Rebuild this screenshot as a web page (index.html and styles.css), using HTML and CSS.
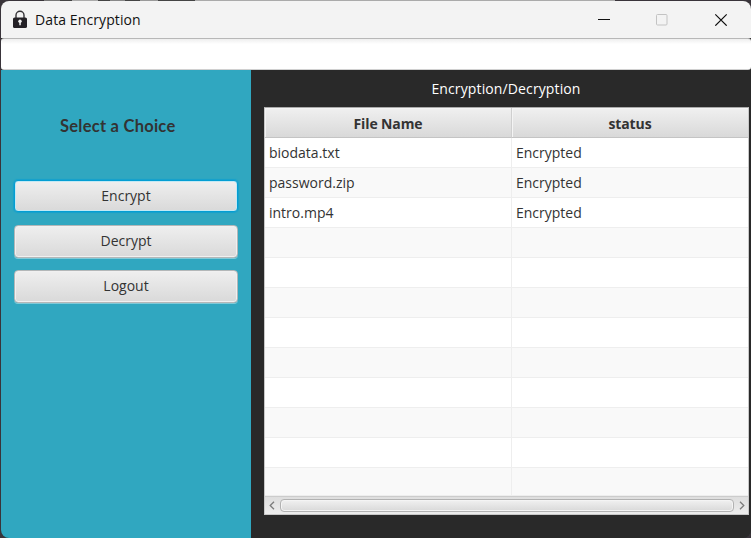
FILE: index.html
```html
<!DOCTYPE html>
<html lang="en">
<head>
<meta charset="utf-8">
<title>Data Encryption</title>
<link rel="stylesheet" href="styles.css">
</head>
<body>
<div class="window">
  <header class="titlebar">
    <svg class="lock" width="14" height="19" viewBox="0 0 14 19"><path d="M3 8V5.2a4 4 0 0 1 8 0V8" fill="none" stroke="#343236" stroke-width="1.4"/><rect y="7.5" width="14" height="10.5" rx="1.6" fill="#242126"/><circle cx="7" cy="11.3" r="1.7" fill="#f3f3f3"/><path d="M6.3 11h1.5v4.3H6.3z" fill="#f3f3f3"/></svg>
    <span class="title">Data Encryption</span>
    <svg class="controls" width="132" height="14" viewBox="0 0 132 14"><path d="M0 7.5h12" stroke="#111"/><rect x="58.5" y="2.5" width="10.5" height="10.5" rx="1" fill="none" stroke="#c3c3c3"/><path d="M117.3 2.3l11.4 11.4M128.7 2.3l-11.4 11.4" stroke="#111" stroke-width="1.2"/></svg>
  </header>
  <div class="toolbar"></div>
  <div class="content">
    <aside class="sidebar">
      <h1 class="heading">Select a Choice</h1>
      <button class="button focused">Encrypt</button>
      <button class="button">Decrypt</button>
      <button class="button">Logout</button>
    </aside>
    <main class="main">
      <h2 class="caption">Encryption/Decryption</h2>
      <div class="table">
        <div class="row head"><div>File Name</div><div>status</div></div>
        <div class="row"><div>biodata.txt</div><div>Encrypted</div></div>
        <div class="row"><div>password.zip</div><div>Encrypted</div></div>
        <div class="row"><div>intro.mp4</div><div>Encrypted</div></div>
        <div class="row"><div></div><div></div></div>
        <div class="row"><div></div><div></div></div>
        <div class="row"><div></div><div></div></div>
        <div class="row"><div></div><div></div></div>
        <div class="row"><div></div><div></div></div>
        <div class="row"><div></div><div></div></div>
        <div class="row"><div></div><div></div></div>
        <div class="row"><div></div><div></div></div>
        <div class="row last"><div></div><div></div></div>
        <div class="scrollbar">
          <svg width="6" height="9" viewBox="0 0 6 9"><path d="M5 .7L1.2 4.5 5 8.3" fill="none" stroke="#7c7c7c" stroke-width="1.3"/></svg>
          <div class="thumb"></div>
          <svg width="6" height="9" viewBox="0 0 6 9"><path d="M1 .7l3.8 3.8L1 8.3" fill="none" stroke="#7c7c7c" stroke-width="1.3"/></svg>
        </div>
      </div>
    </main>
  </div>
</div>
</body>
</html>
```
FILE: styles.css
```css
* { box-sizing: border-box; }
body {
  margin: 0;
  width: 751px;
  height: 538px;
  overflow: hidden;
  background: linear-gradient(90deg, #39343a 0 44px, #777 44px 60px, #444 60px 72px, #aaa 72px 98px, #444 98px 110px, #888 110px 125px, #444 125px 140px, #999 140px 158px, #444 158px 195px, #aaa 195px 615px, #39343a 615px) 0 0 / 751px 1px no-repeat, #39343a;
  color: #333;
  font: 14px/20px "Open Sans", "Noto Sans", sans-serif;
}
.window {
  height: 537px;
  margin: 1px 0 0 1px;
  border-radius: 8px;
  overflow: hidden;
  display: flex;
  flex-direction: column;
  background: #292929;
}
.titlebar {
  height: 37px;
  flex: none;
  display: flex;
  align-items: center;
  padding: 0 21px 0 12px;
  background: #f3f3f3;
  color: #111;
}
.title { margin-left: 8px; letter-spacing: .1px; }
.controls { margin: -2px 0 0 auto; }
.toolbar {
  height: 32px;
  flex: none;
  border-top: 1px solid #b7b7b7;
  border-bottom: 1px solid #d0d0d0;
  border-radius: 3px;
  background: linear-gradient(#eee, #fff 5px);
}
.content { flex: 1; display: flex; min-height: 0; }
.sidebar {
  width: 250px;
  flex: none;
  padding: 46px 13px 0;
  background: #30a7c0;
}
.heading {
  margin: 0 0 44px 46px;
  font: bold 16.5px/20px Lato, sans-serif;
  letter-spacing: .25px;
}
.button {
  display: block;
  width: 224px;
  height: 33px;
  margin: 0 0 12px;
  padding: 0 0 1px;
  border: 1px solid #b3b7b8;
  border-radius: 4px;
  background: linear-gradient(#efefef, #d9d9d9);
  box-shadow: inset 0 0 0 1px #f0f0f0, 0 1px 0 #80cad8;
  color: #333;
  font: inherit;
}
.focused {
  height: 32px;
  margin-bottom: 13px;
  border-color: #039ed3;
  box-shadow: inset 0 0 0 1px #c3e9f4, 0 0 1px 1px #16a1cc;
}
.main { flex: 1; padding: 9px 1px 0 13px; }
.caption {
  margin: 0 0 8px;
  padding-right: 2px;
  font: inherit;
  letter-spacing: .12px;
  color: #fff;
  text-align: center;
}
.table {
  width: 485px;
  height: 408px;
  border: 1px solid #c8c8c8;
  border-top-color: #aaa;
  background: #fff;
}
.row { display: grid; grid-template-columns: 247px 1fr; height: 30px; }
.row > div {
  display: flex;
  align-items: center;
  padding-left: 4px;
  border-bottom: 1px solid #eee;
  border-right: 1px solid #eee;
}
.row > div:last-child { border-right: 0; }
.row:nth-child(odd) { background: #f9f9f9; }
.row.head { font-weight: bold; background: linear-gradient(#f0f0f0, #d8d8d8); }
.row.head > div {
  justify-content: center;
  padding: 2px 0 0;
  letter-spacing: -.1px;
  border-bottom-color: #c4c4c4;
  border-right-color: #cfcfcf;
  box-shadow: inset 1px 1px #f4f4f4;
}
.row.last { height: 28px; }
.scrollbar {
  height: 18px;
  display: flex;
  align-items: center;
  gap: 5px;
  padding: 0 3px 0 4px;
  border-top: 1px solid #ccc;
  background: linear-gradient(#dedede, #ededed);
}
.thumb {
  flex: 1;
  height: 13px;
  border: 1px solid #b2b2b2;
  border-radius: 4px;
  background: linear-gradient(#f1f1f1, #d9d9d9);
  box-shadow: inset 0 0 0 1px #f4f4f4;
}
```
